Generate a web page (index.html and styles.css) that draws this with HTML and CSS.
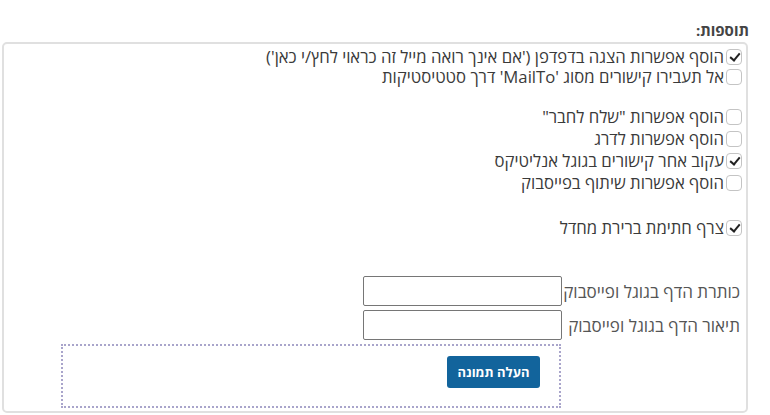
FILE: index.html
```html
<!DOCTYPE html>
<html lang="he" dir="rtl">
<head>
<meta charset="utf-8">
<link rel="stylesheet" href="styles.css">
</head>
<body>
<div class="page">
  <div class="title">תוספות:</div>
  <div class="box">
    <div class="group g1">
      <div class="row"><span class="cb checked"></span><span class="lbl">הוסף אפשרות הצגה בדפדפן ('אם אינך רואה מייל זה כראוי לחץ/י כאן')</span></div>
      <div class="row"><span class="cb"></span><span class="lbl">אל תעבירו קישורים מסוג 'MailTo' דרך סטטיסטיקות</span></div>
    </div>
    <div class="group g2">
      <div class="row"><span class="cb"></span><span class="lbl">הוסף אפשרות "שלח לחבר"</span></div>
      <div class="row"><span class="cb"></span><span class="lbl">הוסף אפשרות לדרג</span></div>
      <div class="row"><span class="cb checked"></span><span class="lbl">עקוב אחר קישורים בגוגל אנליטיקס</span></div>
      <div class="row"><span class="cb"></span><span class="lbl">הוסף אפשרות שיתוף בפייסבוק</span></div>
    </div>
    <div class="group g3">
      <div class="row"><span class="cb checked"></span><span class="lbl">צרף חתימת ברירת מחדל</span></div>
    </div>
    <div class="fields">
      <div class="field"><label class="flabel">כותרת הדף בגוגל ופייסבוק</label><input class="finput" type="text"></div>
      <div class="field"><label class="flabel">תיאור הדף בגוגל ופייסבוק</label><input class="finput" type="text"></div>
      <div class="upload"><button class="btn">העלה תמונה</button></div>
    </div>
  </div>
</div>
</body>
</html>
```
FILE: styles.css
```css
html, body {
  margin: 0;
  padding: 0;
  background: #fff;
}
body {
  font-family: "Open Sans", "DejaVu Sans", sans-serif;
  color: #333;
}
.page {
  width: 746px;
  margin-right: 22px;
  padding-top: 20px;
}
.title {
  font-size: 15px;
  font-weight: 700;
  color: #444;
  line-height: 20px;
  height: 20px;
  margin-bottom: 2px;
  margin-right: -1px;
}
.box {
  border: 2px solid #e0e0e0;
  border-radius: 5px;
  padding-top: 3px;
  box-sizing: border-box;
  height: 371px;
}
.group { padding-right: 4px; }
.g1 .row { height: 20px; line-height: 20px; }
.g2 { margin-top: 19px; }
.g2 .row { height: 22px; line-height: 22px; }
.g3 { margin-top: 23px; }
.g3 .row { height: 22px; line-height: 22px; }
.row {
  display: flex;
  align-items: center;
  gap: 2px;
  font-size: 16.7px;
  white-space: nowrap;
}
.lbl { color: #3a3a3a; }
.cb {
  position: relative;
  width: 16px;
  height: 16px;
  box-sizing: border-box;
  border: 1px solid #c4c4c4;
  border-radius: 4px;
  flex: none;
  background: #fff;
}
.cb.checked::after {
  content: "";
  position: absolute;
  left: 5px;
  top: 1px;
  width: 4px;
  height: 8px;
  border: solid #222;
  border-width: 0 2.5px 2.5px 0;
  transform: rotate(40deg);
}
.fields {
  margin-top: 37px;
  padding-right: 6px;
  display: flex;
  flex-direction: column;
  align-items: flex-start;
}
.field {
  display: flex;
  align-items: center;
  height: 30px;
  margin-bottom: 4px;
}
.flabel {
  width: 178px;
  font-size: 17px;
  color: #555;
  white-space: nowrap;
}
.finput {
  width: 199px;
  height: 30px;
  box-sizing: border-box;
  border: 1px solid #767676;
  border-radius: 2px;
  margin: 0;
  padding: 0 3px;
  background: #fff;
}
.upload {
  margin-right: 179px;
  width: 500px;
  height: 64px;
  box-sizing: border-box;
  border: 2px dotted #a9a5cb;
  padding: 10px 19px 0 0;
}
.btn {
  width: 93px;
  height: 32px;
  background: #12649c;
  color: #fff;
  border: 0;
  border-radius: 3px;
  font-family: "Open Sans", "DejaVu Sans", sans-serif;
  font-size: 13px;
  font-weight: 700;
  padding: 0;
}
```
